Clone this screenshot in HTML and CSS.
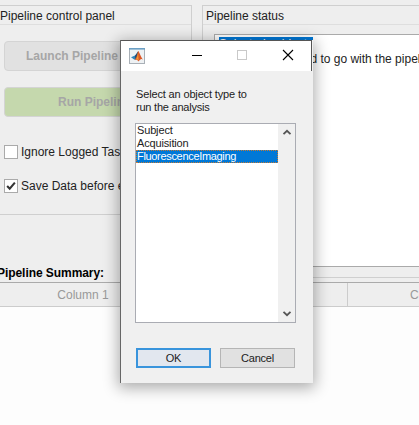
FILE: index.html
```
<!DOCTYPE html>
<html lang="en">
<head>
<meta charset="utf-8">
<title>Pipeline control panel</title>
<link rel="stylesheet" href="styles.css">
</head>
<body>
<main class="app">
  <div class="top">
    <div class="left">
      <section class="panel control">
        <h2 class="panel-title">Pipeline control panel</h2>
        <div class="controls">
          <button class="action launch">Launch Pipeline</button>
          <button class="action run">Run Pipeline</button>
          <div class="check"><span class="box"></span><span class="check-label">Ignore Logged Tasks</span></div>
          <div class="check"><span class="box"><svg viewBox="0 0 14 14"><path d="M2.5 7l3 3.2L11.5 3"/></svg></span><span class="check-label">Save Data before exit</span></div>
        </div>
      </section>
      <div class="summary"><span class="summary-text">Pipeline Summary:</span></div>
    </div>
    <section class="panel status">
      <h2 class="panel-title">Pipeline status</h2>
      <div class="log"><div class="selected-line">Selected subject</div><div class="log-line">Pipeline loaded to go with the pipeline</div></div>
    </section>
  </div>
  <div class="table-head"><div class="col">Column 1</div><div class="col"></div><div class="col">Column 3</div></div>
</main>

<div class="dialog">
  <header class="titlebar">
    <svg class="logo" viewBox="0 0 16 16">
      <rect x=".5" y=".5" width="15" height="15" fill="#eef1f3" stroke="#a9b0b7"/>
      <path d="M0 .8h16" stroke="#6b9fc5" stroke-width="1.6"/>
      <path d="M2 9.2l4-1.7 2.2-2.3L7.5 10l-2 1.8z" fill="#2e83b9"/>
      <path d="M6 8l3.2-5L8.8 9l-2.3 3z" fill="#284b70"/>
      <path d="M9.2 3c1.3 1 2.5 6 4.8 8.5-1.8-1.2-2.8-.4-4.5 2C8.7 12 7.5 11.6 5.5 12c2.2-2 2.5-5 3.7-9z" fill="#dc5726"/>
      <path d="M9.1 4l.5 8.8c-.8-1.4-1.5-1.5-2.6-1.5C8.3 9.5 8.6 7 9.1 4z" fill="#f59a32"/>
    </svg>
    <svg class="window-icons" viewBox="0 0 104 12">
      <path d="M0 6.5h10" stroke="#000"/>
      <rect x="45.5" y="1.5" width="9" height="9" fill="none" stroke="#c9c9c9"/>
      <path d="M91 1l10 10M101 1L91 11" stroke="#000" stroke-width="1.1"/>
    </svg>
  </header>
  <div class="dialog-body">
    <p class="prompt">Select an object type to<br><span class="prompt-end">run the analysis</span></p>
    <div class="listbox">
      <ul class="options">
        <li>Subject</li><li>Acquisition</li><li class="chosen">FluorescenceImaging</li>
      </ul>
      <div class="scrollbar">
        <svg viewBox="0 0 10 7"><path d="M1.5 5.2L5 1.8l3.5 3.4"/></svg>
        <svg viewBox="0 0 10 7"><path d="M1.5 1.8L5 5.2l3.5-3.4"/></svg>
      </div>
    </div>
    <div class="buttons"><button class="btn ok">OK</button><button class="btn">Cancel</button></div>
  </div>
</div>
</body>
</html>
```
FILE: styles.css
```
* { box-sizing: border-box; }
body {
  margin: 0;
  height: 425px;
  overflow: hidden;
  background: #fdfdfd;
  color: #222;
  font: 12px/14px "Liberation Sans", Arial, sans-serif;
}
button { font: inherit; padding: 0; }
.app { width: 419px; overflow: hidden; }
.top {
  display: grid;
  grid-template-columns: 192px 240px;
  column-gap: 10px;
  height: 282px;
  padding-top: 5px;
  background: #eee;
}
.left { display: flex; flex-direction: column; justify-content: space-between; }
.panel { border: 1px solid #cfcfcf; }
.control { height: 210px; border-left: 0; }
.status { height: 273px; }
.panel-title {
  height: 19px;
  margin: 0;
  border-bottom: 1px solid #dedede;
  font-size: 12px;
  font-weight: 400;
  line-height: 20px;
  white-space: nowrap;
}
.status .panel-title { padding-left: 3px; }
.controls { padding: 16px 0 0 4px; }
.action {
  display: block;
  width: 181px;
  height: 30px;
  border: 1px solid #d4d4d4;
  border-radius: 4px;
  background: #e1e1e1;
  color: #a6a6a6;
  font-weight: 700;
  text-align: left;
  white-space: nowrap;
}
.launch { padding-left: 21px; }
.run { margin: 16px 0 28px; padding-left: 53px; background: #c5d8ad; }
.check { display: flex; gap: 3px; height: 14px; margin-bottom: 20px; line-height: 15px; white-space: nowrap; }
.box { width: 14px; height: 14px; border: 1px solid #aaa; background: #fff; }
.box svg { display: block; width: 12px; height: 12px; fill: none; stroke: #333; stroke-width: 2.4; }
.summary { height: 17px; margin-left: -3px; color: #000; font-weight: 700; line-height: 17px; letter-spacing: -.06px; }
.log {
  width: 226px;
  height: 233px;
  margin: 9px 0 0 11px;
  padding: 2px 4px;
  border: 1px solid #aaa;
  background: #fff;
  line-height: 15px;
  white-space: nowrap;
}
.selected-line { width: 94px; background: #0078d7; color: #fff; }
.log-line { padding-left: 16px; }
.table-head {
  display: grid;
  grid-template-columns: 167px 181px 181px;
  width: 529px;
  height: 25px;
  border-top: 1px solid #aaa;
  border-bottom: 1px solid #ccc;
  background: #eee;
  color: #999;
  line-height: 24px;
  text-align: center;
}
.col { border-right: 1px solid #ccc; }
.col:last-child { padding-left: 62px; text-align: left; }
.dialog {
  position: absolute;
  left: 120px;
  top: 40px;
  width: 193px;
  height: 343px;
  border-left: 1px solid #666;
  background: #f0f0f0;
  box-shadow: 0 3px 14px 2px rgba(0, 0, 0, .32);
}
.titlebar {
  display: flex;
  width: 191px;
  height: 31px;
  padding: 7px 0 0 8px;
  border-top: 1px solid #555;
  border-right: 1px solid #555;
  background: #fff;
}
.logo { width: 16px; height: 16px; flex: none; }
.window-icons { width: 104px; height: 12px; margin: 1px 0 0 47px; flex: none; }
.dialog-body { padding: 17px 17px 0 14px; font-size: 11px; line-height: 13px; }
.prompt { margin: 0 0 9px 1px; letter-spacing: -.15px; white-space: nowrap; }
.prompt-end { letter-spacing: -.22px; }
.listbox {
  display: flex;
  width: 161px;
  height: 200px;
  border: 1px solid #aaacb3;
  background: #fff;
}
.options { flex: 1; margin: 0; padding: 0; list-style: none; }
.options li { height: 13px; padding-left: 1px; line-height: 13px; letter-spacing: -.15px; }
.options .chosen { background: #0078d7; color: #fff; letter-spacing: -.32px; outline: 1px dotted #c47a35; outline-offset: -1px; }
.scrollbar {
  display: flex;
  flex-direction: column;
  justify-content: space-between;
  align-items: center;
  width: 17px;
  padding: 5px 0;
  background: #f0f0f0;
}
.scrollbar svg { width: 10px; height: 7px; fill: none; stroke: #555; stroke-width: 1.8; }
.buttons { display: flex; gap: 9px; margin: 25px 0 0 1px; }
.btn { width: 75px; height: 20px; border: 1px solid #b5b5b5; background: #e1e1e1; color: #222; letter-spacing: -.2px; }
.ok { border: 2px solid #3994dc; background: #e2e7ef; }
```
